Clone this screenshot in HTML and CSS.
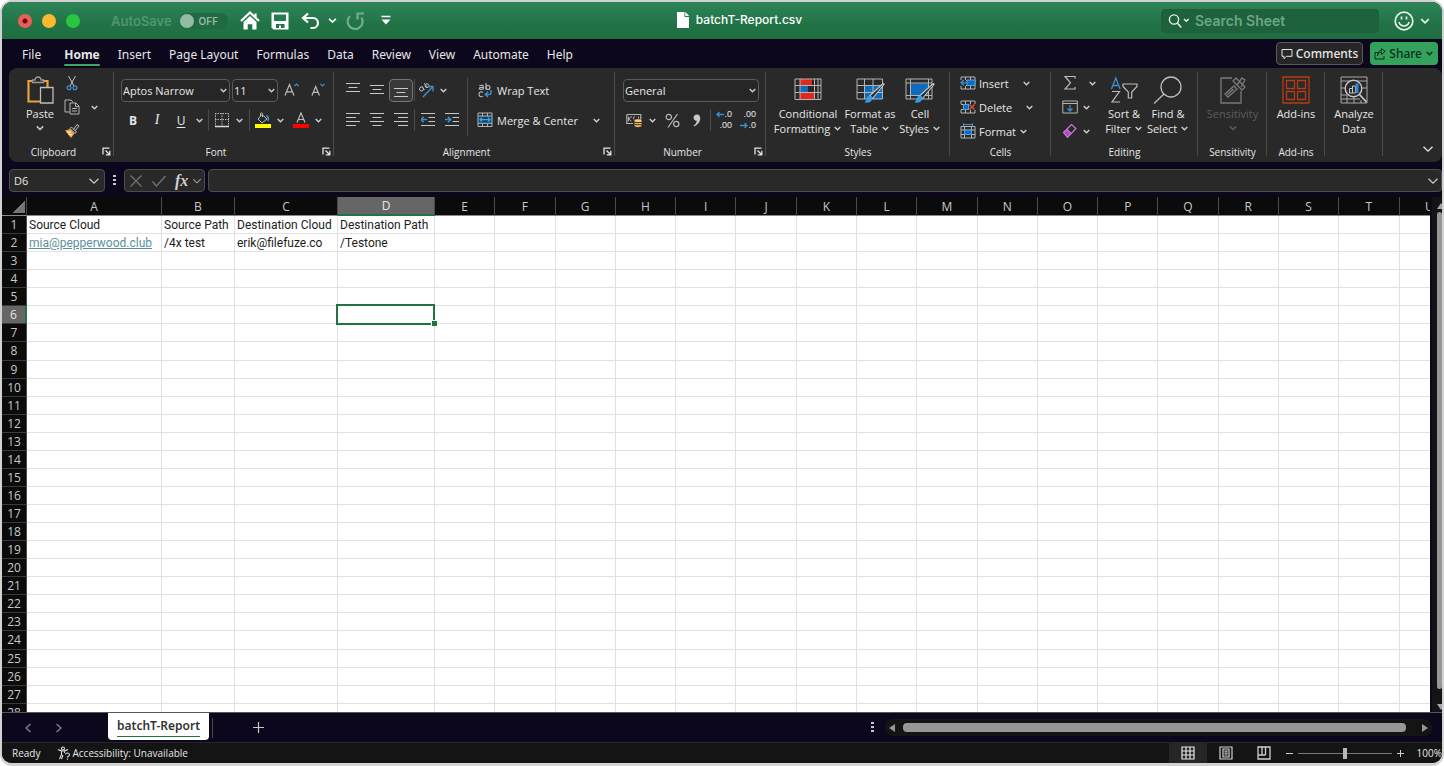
FILE: index.html
```html
<!DOCTYPE html>
<html lang="en">
<head>
<meta charset="utf-8">
<title>batchT-Report.csv</title>
<link rel="stylesheet" href="styles.css">
</head>
<body>
<svg class="sprite" aria-hidden="true">
  <symbol id="chev" viewBox="0 0 8 8"><path d="M1.500 2.700 4 5.200l2.500-2.500" fill="none" stroke="currentColor" stroke-width="1.200"/></symbol>
  <symbol id="chev-wide" viewBox="0 0 12 8"><path d="M1.500 1.800 6 6.200l4.500-4.400" fill="none" stroke="currentColor" stroke-width="1.300"/></symbol>
  <symbol id="launch" viewBox="0 0 9 9"><path d="M1 7.500V1.200h6.500M3.500 3.500l4 4M7.800 3.800v4h-4" fill="none" stroke="currentColor" stroke-width="1.300"/></symbol>
</svg>

<div class="window">
  <header class="titlebar">
    <div class="title-left">
      <div class="lights">
        <button class="light light-close" aria-label="Close"></button>
        <button class="light light-min" aria-label="Minimize"></button>
        <button class="light light-max" aria-label="Zoom"></button>
      </div>
      <label class="autosave"><span>AutoSave</span><input type="checkbox" class="switch-input"><span class="switch"><i></i>OFF</span></label>
      <button class="tb home" aria-label="Home"><svg width="20" height="20" viewBox="0 0 20 20"><path d="M1 10 10 1.500l9 8.500M15.500 2.500v4" fill="none" stroke="#fff" stroke-width="2.200"/><path d="M3.500 11 10 5l6.500 6v7.500h-4.200v-5.300H7.700v5.300H3.500z" fill="#fff"/></svg></button>
      <button class="tb" aria-label="Save"><svg width="18" height="18" viewBox="0 0 18 18"><path d="M.5.500h17v17h-15l-2-2z" fill="#fff"/><path d="M3 2.500h12v6.500H3z" fill="#277d4e"/><path d="M5 12h8.500v4H10v-2.500H8V16H5z" fill="#227345"/></svg></button>
      <button class="tb undo" aria-label="Undo"><svg width="20" height="18" viewBox="0 0 20 18"><path d="M7 1.500 2 6l5 4.500M2.500 6H12a5 5 0 0 1 0 10H9.500" fill="none" stroke="#fff" stroke-width="2.200"/></svg><svg width="11" height="11" viewBox="0 0 8 8"><use href="#chev"/></svg></button>
      <button class="tb redo" aria-label="Redo"><svg width="20" height="20" viewBox="0 0 20 20"><path d="M4 5a7.500 7.500 0 1 0 11.500 1.500M11.500 8.500V2.500H18" fill="none" stroke="#73ad8b" stroke-width="2.200"/></svg></button>
      <button class="tb more" aria-label="Customize toolbar"><svg width="10" height="11" viewBox="0 0 10 11"><path d="M.5 1.500h9" stroke="#fff" stroke-width="1.500"/><path d="M.5 4.500h9L5 9.500z" fill="#fff"/></svg></button>
    </div>
    <div class="doc-title"><svg width="14" height="18" viewBox="0 0 14 18"><path d="M1 1h7.500v5H13v11H1z" fill="#fff"/><path d="M9.300.8 13.200 5H9.300z" fill="#fff"/></svg><span>batchT-Report.csv</span></div>
    <div class="title-right">
      <label class="search"><svg width="22" height="16" viewBox="0 0 22 16"><circle cx="6" cy="6.500" r="4.600" fill="none" stroke="#e6f2ea" stroke-width="1.400"/><path d="m9.300 10 4 4.500M16 6l2.300 2.300L20.600 6" fill="none" stroke="#e6f2ea" stroke-width="1.500"/></svg><input type="search" placeholder="Search Sheet" aria-label="Search Sheet"></label>
      <button class="smile" aria-label="Feedback"><svg width="20" height="20" viewBox="0 0 20 20"><circle cx="10" cy="10" r="8.800" fill="none" stroke="#e6f2ea" stroke-width="1.700"/><path d="M7.500 5.500v3M12.500 5.500v3" stroke="#e6f2ea" stroke-width="1.700"/><path d="M5 11c1.200 5.200 8.800 5.200 10 0" fill="none" stroke="#e6f2ea" stroke-width="1.500"/></svg><svg width="12" height="12"><use href="#chev"/></svg></button>
    </div>
  </header>

  <nav class="tabs">
    <button class="tab file">File</button>
    <button class="tab active">Home</button>
    <button class="tab">Insert</button>
    <button class="tab">Page Layout</button>
    <button class="tab">Formulas</button>
    <button class="tab">Data</button>
    <button class="tab">Review</button>
    <button class="tab">View</button>
    <button class="tab">Automate</button>
    <button class="tab">Help</button>
    <div class="tab-actions">
      <button class="comments"><svg width="12" height="12" viewBox="0 0 12 12"><path d="M1 1.500h10v6.800H5.500L3 10.800V8.300H1z" fill="none" stroke="currentColor"/></svg>Comments</button>
      <button class="share"><svg width="12" height="12" viewBox="0 0 12 12"><path d="M4 4.500H1V11h9V8M3.500 8c.3-2.500 1.500-3.800 4-3.800V6.500L11.300 3.300 7.500.7v1.800C4.800 2.800 3.500 4.500 3.500 8z" fill="none" stroke="currentColor"/></svg>Share<svg class="c" width="9" height="9"><use href="#chev"/></svg></button>
    </div>
  </nav>

  <section class="ribbon" aria-label="Home ribbon">
    <div class="group g-clip">
      <div class="body">
        <button class="big paste"><svg width="28" height="28" viewBox="0 0 28 28"><path d="M6 5H2.500v20.500H14" fill="none" stroke="#e9a33a" stroke-width="2.200"/><path d="M17 5h4.500v7" fill="none" stroke="#e9a33a" stroke-width="2.200"/><path d="M6.500 6.500V4H9c.3-4 5.700-4 6 0h2.500v2.500z" fill="#2a2a2a" stroke="#9a9a9a" stroke-width="1.300"/><path d="M14.500 11.500H27V27H14.500z" fill="#262626" stroke="#bdbdbd" stroke-width="1.300"/></svg><span>Paste</span><svg class="c" width="10" height="10"><use href="#chev"/></svg></button>
        <div class="minis">
          <button class="mini" aria-label="Cut"><svg width="12" height="16" viewBox="0 0 12 16"><path d="M2.500 1 8 11M9.500 1 4 11" stroke="#c8c8c8" fill="none"/><circle cx="3" cy="12.700" r="1.900" fill="none" stroke="#3d8fcc" stroke-width="1.300"/><circle cx="9" cy="12.700" r="1.900" fill="none" stroke="#3d8fcc" stroke-width="1.300"/></svg></button>
          <div class="row"><button class="mini" aria-label="Copy"><svg width="16" height="16" viewBox="0 0 16 16"><path d="M5.500 13H1V1h6l2 2" fill="none" stroke="#b4b4b4"/><path d="M6 4h6l3 3v8H6zM11.500 4v3.500H15M8 9.500h5M8 12h5" fill="none" stroke="#b4b4b4"/></svg></button><button class="dd" aria-label="Copy options"><svg class="c" width="9" height="9"><use href="#chev"/></svg></button></div>
          <button class="mini" aria-label="Format Painter"><svg width="16" height="16" viewBox="0 0 16 16"><path d="M1 7.500 6.500 6l4 4.500L7 15z" fill="#eca63d"/><path d="m3 9 4 .3M4.500 11.500l3.500.3" stroke="#fff"/><path d="m6 5.500 5 5 1.500-1.500-5-5zM9.500 6.500l3.500-5 2 1.500-4 5" fill="#2a2a2a" stroke="#c4c4c4"/></svg></button>
        </div>
      </div>
      <div class="foot"><span>Clipboard</span><button class="launch" aria-label="Clipboard settings"><svg width="9" height="9"><use href="#launch"/></svg></button></div>
    </div>

    <div class="group g-font">
      <div class="body rows">
        <div class="row tight">
          <div class="combo w-font"><select aria-label="Font"><option>Aptos Narrow</option></select><svg class="c" width="9" height="9"><use href="#chev"/></svg></div>
          <div class="combo w-size"><select aria-label="Font size"><option>11</option></select><svg class="c" width="9" height="9"><use href="#chev"/></svg></div>
          <button class="ib" aria-label="Increase font size"><svg width="16" height="16" viewBox="0 0 16 16"><path d="M1 13.500 5.500 2.500l4.500 11M2.700 9.800h5.600" fill="none" stroke="#bdbdbd" stroke-width="1.200"/><path d="m10.500 4 2-2 2 2" fill="none" stroke="#3d8fcc" stroke-width="1.200"/></svg></button>
          <button class="ib" aria-label="Decrease font size"><svg width="16" height="16" viewBox="0 0 16 16"><path d="m2 13.500 3.700-9 3.700 9M3.400 10.300H8" fill="none" stroke="#bdbdbd" stroke-width="1.200"/><path d="m10.500 2 2 2 2-2" fill="none" stroke="#3d8fcc" stroke-width="1.200"/></svg></button>
        </div>
        <div class="row">
          <button class="ib b">B</button><button class="ib i">I</button><button class="ib u">U</button><button class="dd dd-s" aria-label="Underline options"><svg class="c" width="9" height="9"><use href="#chev"/></svg></button>
          <span class="sep"></span>
          <button class="ib n" aria-label="Borders"><svg width="16" height="16" viewBox="0 0 16 16"><path d="M1.500 1v13M14.500 1v13M8 1v13M1 1.500h14M1 7.500h14" stroke="#b4b4b4" stroke-dasharray="1.500 1"/><path d="M1 14.500h14" stroke="#ddd" stroke-width="1.500"/></svg></button><button class="dd" aria-label="Border options"><svg class="c" width="9" height="9"><use href="#chev"/></svg></button>
          <span class="sep"></span>
          <button class="ib n" aria-label="Fill color"><svg width="16" height="16" viewBox="0 0 16 16"><path d="m7 2.500 5 4.500-5 4-4-4zM5.500 4V1.500c0-1 2-1 2 0V5" fill="none" stroke="#bdbdbd"/><path d="M11 4c3 0 2.500 3 2 5" fill="none" stroke="#3d8fcc" stroke-width="1.600"/><path d="M0 12h16v4H0z" fill="#ff0"/></svg></button><button class="dd" aria-label="Fill options"><svg class="c" width="9" height="9"><use href="#chev"/></svg></button>
          <span class="gap"></span>
          <button class="ib n" aria-label="Font color"><svg width="16" height="16" viewBox="0 0 16 16"><path d="M4 10.500 8 1l4 9.500M5.500 7.500h5" fill="none" stroke="#bdbdbd" stroke-width="1.200"/><path d="M0 12h16v4H0z" fill="#f00"/></svg></button><button class="dd" aria-label="Font color options"><svg class="c" width="9" height="9"><use href="#chev"/></svg></button>
        </div>
      </div>
      <div class="foot"><span>Font</span><button class="launch" aria-label="Font settings"><svg width="9" height="9"><use href="#launch"/></svg></button></div>
    </div>

    <div class="group g-align">
      <div class="body">
        <div class="rows left">
          <div class="row">
            <button class="ib" aria-label="Top align"><svg class="ln" width="14" height="14" viewBox="0 0 14 14"><path d="M0 .5h14M2.500 4.500h9M0 8.500h14"/></svg></button>
            <button class="ib" aria-label="Middle align"><svg class="ln" width="14" height="14" viewBox="0 0 14 14"><path d="M0 2.500h14M2.500 6.500h9M0 10.500h14"/></svg></button>
            <button class="ib on" aria-label="Bottom align"><svg class="ln" width="14" height="14" viewBox="0 0 14 14"><path d="M0 5.500h14M2.500 9.500h9M0 13.500h14"/></svg></button>
            <span class="sep s"></span>
            <button class="ib n" aria-label="Orientation"><svg width="16" height="16" viewBox="0 0 16 16"><circle cx="3.500" cy="7" r="2" fill="none" stroke="#bdbdbd"/><path d="M3.500 4 6.500 8M6 1l4 5" stroke="#bdbdbd"/><circle cx="9" cy="3.700" r="1.900" fill="none" stroke="#bdbdbd"/><path d="m5 15 9.500-10M10 4.500h5v5" fill="none" stroke="#3d8fcc" stroke-width="1.300"/></svg></button><button class="dd" aria-label="Orientation options"><svg class="c" width="9" height="9"><use href="#chev"/></svg></button>
          </div>
          <div class="row">
            <button class="ib" aria-label="Align left"><svg class="ln" width="14" height="14" viewBox="0 0 14 14"><path d="M0 .5h14M0 4.500h10M0 8.500h14M0 12.500h10"/></svg></button>
            <button class="ib" aria-label="Center"><svg class="ln" width="14" height="14" viewBox="0 0 14 14"><path d="M0 .5h14M2.500 4.500h9M0 8.500h14M2.500 12.500h9"/></svg></button>
            <button class="ib" aria-label="Align right"><svg class="ln" width="14" height="14" viewBox="0 0 14 14"><path d="M0 .5h14M4 4.500h10M0 8.500h14M4 12.500h10"/></svg></button>
            <span class="sep s"></span>
            <button class="ib" aria-label="Decrease indent"><svg class="ln" width="14" height="14" viewBox="0 0 14 14"><path d="M0 .5h14M7.500 4.500H14M7.500 8.500H14M0 12.500h14"/><path class="bl" d="M0 6.500h6M2.700 3.800 0 6.500l2.700 2.700"/></svg></button>
            <button class="ib" aria-label="Increase indent"><svg class="ln" width="14" height="14" viewBox="0 0 14 14"><path d="M0 .5h14M7.500 4.500H14M7.500 8.500H14M0 12.500h14"/><path class="bl" d="M0 6.500h5.500M3 3.800l2.700 2.700L3 9.200"/></svg></button>
          </div>
        </div>
        <div class="rows right">
          <button class="tbtn"><svg width="16" height="16" viewBox="0 0 16 16"><g fill="none" stroke="#bdbdbd" stroke-width="1.100"><path d="M2.300 3.800c3-1.200 4-.3 4 1V7.500M6.300 5.200c-3 0-4 .3-4 1.300s3 1.500 4-.3M9 1v6.500"/><circle cx="11" cy="5.500" r="2"/><path d="M6 10.500c-2-1.500-4-.3-4 1.800s2 3.200 4 1.800"/></g><path d="M14 8v2.500c0 1.500-.5 2-2 2H8.500M11 9.800l-2.700 2.700L11 15" fill="none" stroke="#3d8fcc" stroke-width="1.500"/></svg>Wrap Text</button>
          <button class="tbtn merge"><svg width="16" height="16" viewBox="0 0 16 16"><path d="M1 1h14v13.500H1zM1 4h14M1 11.500h14M5.500 1v3M10.500 1v3M5.500 11.500v3M10.500 11.500v3" fill="none" stroke="#b4b4b4"/><path d="M1.500 4.500h13v6.500h-13z" fill="#223c50" stroke="#3d8fcc"/><path d="M3 7.700h10M5 5.700l-2 2 2 2M11 5.700l2 2-2 2" fill="none" stroke="#4aa3e3" stroke-width="1.200"/></svg>Merge &amp; Center<svg class="c" width="9" height="9"><use href="#chev"/></svg></button>
        </div>
      </div>
      <div class="foot"><span>Alignment</span><button class="launch" aria-label="Alignment settings"><svg width="9" height="9"><use href="#launch"/></svg></button></div>
    </div>

    <div class="group g-num">
      <div class="body rows">
        <div class="row"><div class="combo w-num"><select aria-label="Number format"><option>General</option></select><svg class="c" width="9" height="9"><use href="#chev"/></svg></div></div>
        <div class="row">
          <button class="ib cur" aria-label="Accounting format"><svg width="16" height="16" viewBox="0 0 16 16"><path d="M.8 2.500h14v5M.8 2.500v9H7" fill="none" stroke="#b4b4b4" stroke-width="1.200"/><path d="M6 5c-3-.5-3.500 3.500-.5 4M2.500 4.500v5M9 4.500c-2 0-2 2.500-1 3M12.500 4.500v2" fill="none" stroke="#b4b4b4"/><path d="M8.500 8.500h7V14c0 1.500-7 1.500-7 0z" fill="#e9b35a"/><path d="M8.500 10.500h7M8.500 12.700h7" stroke="#4a3615"/><ellipse cx="12" cy="8.500" rx="3.500" ry="1.300" fill="#f6cf8a"/></svg></button><button class="dd" aria-label="Accounting options"><svg class="c" width="9" height="9"><use href="#chev"/></svg></button>
          <button class="ib pct" aria-label="Percent"><svg width="15" height="15" viewBox="0 0 15 15"><g fill="none" stroke="#bdbdbd" stroke-width="1.200"><circle cx="3.800" cy="4" r="2.700"/><circle cx="11.200" cy="11" r="2.700"/><path d="M12.500 1 3 14.500"/></g></svg></button>
          <button class="ib" aria-label="Comma style"><svg width="10" height="15" viewBox="0 0 10 15"><path d="M5 1.500c4.500 0 5 8-2.500 12l-.8-1c2.500-1.800 3-3.300 3-4.700C.5 8 .5 1.500 5 1.500z" fill="#c8c8c8"/></svg></button>
          <span class="sep s"></span>
          <button class="ib dec" aria-label="Increase decimal"><span><svg width="8" height="7" viewBox="0 0 8 7"><path d="M8 3.500H1M3.500 1 1 3.500 3.500 6" fill="none" stroke="#3d8fcc" stroke-width="1.300"/></svg>.0</span><span>.00</span></button>
          <button class="ib dec" aria-label="Decrease decimal"><span>.00</span><span><svg width="8" height="7" viewBox="0 0 8 7"><path d="M0 3.500h7M4.500 1 7 3.500 4.500 6" fill="none" stroke="#3d8fcc" stroke-width="1.300"/></svg>.0</span></button>
        </div>
      </div>
      <div class="foot"><span>Number</span><button class="launch" aria-label="Number settings"><svg width="9" height="9"><use href="#launch"/></svg></button></div>
    </div>

    <div class="group g-styles">
      <div class="body">
        <button class="big w66"><svg width="28" height="28" viewBox="0 0 28 28"><path d="M6 3h12v6H6zM6 17h14v6H6z" fill="#e0281e"/><path d="M6 10h8v6H6z" fill="#0f6cbd"/><path d="M1 3h26v20.500H1zM1 9.500h26M1 16.500h26M6 3v20.500M20.500 3v20.500M24 3v20.500" fill="none" stroke="#b4b4b4"/></svg><span>Conditional<br>Formatting <svg class="c" width="9" height="9"><use href="#chev"/></svg></span></button>
        <button class="big w58"><svg width="30" height="28" viewBox="0 0 30 28"><path d="M10 10h17v13H10z" fill="#0f6cbd"/><path d="M2 3h25.500v20H2zM2 9.500h25.500M2 16.500h25.500M9.500 3v20M18 3v20" fill="none" stroke="#b4b4b4"/><path d="M29 8.500 17.500 22.500l-3-2.500L27 8.500c1.500-1 2.500-.7 2 0z" fill="#2a2a2a" stroke="#c8c8c8" stroke-width="1.100"/><path d="M14.500 19.500c2.200.3 3.200 1.500 3 3-1 4-4.500 4.500-8 4 2-1.500 1.500-6 5-7z" fill="#3a9be0"/></svg><span>Format as<br>Table <svg class="c" width="9" height="9"><use href="#chev"/></svg></span></button>
        <button class="big w42"><svg width="30" height="28" viewBox="0 0 30 28"><path d="M6 7.500h18V19H6z" fill="#0f6cbd"/><path d="M1 3h26v20H1zM1 7h26M1 19.500h26M5.500 3v20M23.500 3v20" fill="none" stroke="#b4b4b4"/><path d="M29 8.500 17.500 22.500l-3-2.500L27 8.500c1.500-1 2.500-.7 2 0z" fill="#2a2a2a" stroke="#c8c8c8" stroke-width="1.100"/><path d="M14.500 19.500c2.200.3 3.200 1.500 3 3-1 4-4.500 4.500-8 4 2-1.500 1.500-6 5-7z" fill="#3a9be0"/></svg><span>Cell<br>Styles <svg class="c" width="9" height="9"><use href="#chev"/></svg></span></button>
      </div>
      <div class="foot"><span>Styles</span></div>
    </div>

    <div class="group g-cells">
      <div class="body stack">
        <button class="tbtn far"><svg width="16" height="16" viewBox="0 0 16 16"><path d="M1 2h14v12H1zM1 5.500h14M1 10.500h14M5.500 2v12M10.500 2v12" fill="none" stroke="#b4b4b4"/><path d="M7 5h8v5.500H7z" fill="#0f6cbd" stroke="#4aa3e3"/><path d="M0 5h6v6H0z" fill="#2a2a2a"/><path d="M7 7.800H1M3.800 5 1 7.800l2.800 2.700" fill="none" stroke="#3d8fcc" stroke-width="1.300"/></svg>Insert<svg class="c" width="9" height="9"><use href="#chev"/></svg></button>
        <button class="tbtn far"><svg width="16" height="16" viewBox="0 0 16 16"><path d="M1 5V2h14v3M1 11v3h14v-3M1 5.500h8M1 10.500h8M5.500 2v12M10.500 2v3M10.500 11v3" fill="none" stroke="#b4b4b4"/><path d="M3.500 5.500h5v5h-5z" fill="#0f6cbd" stroke="#4aa3e3"/><path d="m9.500 5.500 5 5M14.500 5.500l-5 5" stroke="#e0483e" stroke-width="1.500"/></svg>Delete<svg class="c" width="9" height="9"><use href="#chev"/></svg></button>
        <button class="tbtn"><svg width="16" height="16" viewBox="0 0 16 16"><path d="M1 3.500h14V15H1zM1 7h14M1 11.500h14M4.500 3.500V15M11.500 3.500V15" fill="none" stroke="#b4b4b4"/><path d="M4.500 7h7v4.500h-7z" fill="#0f6cbd" stroke="#4aa3e3"/><path d="M3.500 1.500h9M3.500 0v3M12.500 0v3" stroke="#3d8fcc"/></svg>Format<svg class="c" width="9" height="9"><use href="#chev"/></svg></button>
      </div>
      <div class="foot"><span>Cells</span></div>
    </div>

    <div class="group g-edit">
      <div class="body">
        <div class="stack">
          <button class="pair wide" aria-label="AutoSum"><svg width="16" height="16" viewBox="0 0 16 16"><path d="M13 3.500V1.500H3l5.500 6.300L3 14h10v-2" fill="none" stroke="#bdbdbd" stroke-width="1.200"/></svg><svg class="c" width="9" height="9"><use href="#chev"/></svg></button>
          <button class="pair" aria-label="Fill"><svg width="16" height="16" viewBox="0 0 16 16"><path d="M.8 2h14.500v12H.8zM.8 4.500h14.500" fill="none" stroke="#b4b4b4"/><path d="M8 6v6M5.500 9.500 8 12l2.500-2.500" fill="none" stroke="#3d8fcc" stroke-width="1.300"/></svg><svg class="c" width="9" height="9"><use href="#chev"/></svg></button>
          <button class="pair" aria-label="Clear"><svg width="16" height="16" viewBox="0 0 16 16"><path d="m1.500 9.500 3.500-3 4 4-3.500 4z" fill="#b146c2"/><path d="M1.500 9.500 9.500 1.500l4.500 4-8.500 9zM5 6.500l4 4" fill="none" stroke="#c77fd4" stroke-width="1.100"/></svg><svg class="c" width="9" height="9"><use href="#chev"/></svg></button>
        </div>
        <button class="big w44"><svg width="28" height="28" viewBox="0 0 28 28"><path d="M1.500 13 5.800 2l4.300 11M3 9.500h5.800" fill="none" stroke="#3d8fcc" stroke-width="1.300"/><path d="M2 15.500h7.500L2 26h8" fill="none" stroke="#bdbdbd" stroke-width="1.200"/><path d="M13 8h14v2.500l-5.300 5.500v6h-3.400v-6L13 10.500z" fill="none" stroke="#bdbdbd" stroke-width="1.200"/></svg><span>Sort &amp;<br>Filter <svg class="c" width="9" height="9"><use href="#chev"/></svg></span></button>
        <button class="big w44"><svg width="36" height="28" viewBox="0 0 36 28"><circle cx="21" cy="11" r="10" fill="none" stroke="#bdbdbd" stroke-width="1.300"/><path d="M14 18 4 27.500" stroke="#bdbdbd" stroke-width="1.300"/></svg><span>Find &amp;<br>Select <svg class="c" width="9" height="9"><use href="#chev"/></svg></span></button>
      </div>
      <div class="foot"><span>Editing</span></div>
    </div>

    <div class="group g-sens">
      <div class="body">
        <button class="big fill" disabled><svg width="28" height="28" viewBox="0 0 28 28"><g fill="none" stroke="#7a7a7a" stroke-width="1.300"><path d="M13 2H2v25h20V15"/><path d="m6 18 9-8 3 3-9 8zM8.500 18.500l6-5.500"/><path d="m14 5 3-3 9 9-3 3zM18 9l5-7 3 2-4 7"/></g></svg><span>Sensitivity</span><svg class="c" width="10" height="10"><use href="#chev"/></svg></button>
      </div>
      <div class="foot"><span>Sensitivity</span></div>
    </div>
    <div class="group g-add">
      <div class="body"><button class="big fill"><svg width="28" height="28" viewBox="0 0 28 28"><path d="M1 1h26v26H1zM4.500 4.500h8v8h-8zM15.500 4.500h8v8h-8zM4.500 15.500h8v8h-8zM15.500 15.500h8v8h-8z" fill="none" stroke="#b83c14" stroke-width="1.300"/></svg><span>Add-ins</span></button></div>
      <div class="foot"><span>Add-ins</span></div>
    </div>
    <div class="group g-add">
      <div class="body"><button class="big fill"><svg width="28" height="28" viewBox="0 0 28 28"><path d="M1 1h26v26H1zM1 5h26M1 12h5M1 19h6M1 23h19M22 12h5M7 19v8M14 21v6M21 24v3" fill="none" stroke="#a8a8a8"/><circle cx="13.500" cy="12.500" r="8.300" fill="#2a2a2a" stroke="#c8c8c8" stroke-width="1.400"/><path d="m19.500 18.500 7 7.500" stroke="#c8c8c8" stroke-width="1.800"/><path d="M9.500 12.500h3V17h-3zM12.500 10h3v7h-3z" fill="none" stroke="#c8c8c8"/><path d="M15.500 7.500h3V17h-3z" fill="#2b88d8"/></svg><span>Analyze<br>Data</span></button></div>
      <div class="foot"></div>
    </div>
    <button class="collapse" aria-label="Collapse ribbon"><svg width="12" height="8"><use href="#chev-wide"/></svg></button>
  </section>

  <section class="formula">
    <div class="namebox"><input value="D6" aria-label="Name box"><svg width="12" height="8"><use href="#chev-wide"/></svg></div>
    <svg class="dots" width="3" height="11" viewBox="0 0 3 11"><path d="M0 0h3v2H0zM0 4h3v2H0zM0 8h3v2H0z" fill="#c8c8c8"/></svg>
    <div class="fx">
      <button aria-label="Cancel"><svg width="14" height="14" viewBox="0 0 14 14"><path d="m1.500 1.500 11 11M12.500 1.500l-11 11" stroke="#737373" stroke-width="1.200"/></svg></button>
      <button aria-label="Enter"><svg width="16" height="14" viewBox="0 0 16 14"><path d="m1.500 7.500 4 4.500 9-10" fill="none" stroke="#737373" stroke-width="1.200"/></svg></button>
      <button class="fxb">fx</button>
      <svg class="dim" width="10" height="8" viewBox="0 0 12 8"><use href="#chev-wide"/></svg>
    </div>
    <div class="finput"><input aria-label="Formula"><svg width="12" height="8"><use href="#chev-wide"/></svg></div>
  </section>

  <main class="sheet">
    <div class="cells"><table id="grid"></table></div>
    <div class="vscroll"><i class="up"></i><b></b><i class="down"></i></div>
  </main>

  <div class="sheetbar">
    <button class="nav" aria-label="Previous sheet"><svg width="8" height="10" viewBox="0 0 8 10"><path d="M6.500 1 2 5l4.500 4" fill="none" stroke="#858585" stroke-width="1.300"/></svg></button>
    <button class="nav" aria-label="Next sheet"><svg width="8" height="10" viewBox="0 0 8 10"><path d="M1.500 1 6 5 1.500 9" fill="none" stroke="#858585" stroke-width="1.300"/></svg></button>
    <button class="sheettab"><span>batchT-Report</span></button>
    <span class="bar"></span>
    <button class="add" aria-label="New sheet"><svg width="11" height="11" viewBox="0 0 11 11"><path d="M5.500 0v11M0 5.500h11" stroke="#c8c8c8" stroke-width="1.200"/></svg></button>
    <svg class="hdots" width="3" height="11" viewBox="0 0 3 11"><path d="M0 0h3v2H0zM0 4h3v2H0zM0 8h3v2H0z" fill="#c8c8c8"/></svg>
    <div class="hscroll"><i class="lt"></i><b></b><i class="rt"></i></div>
  </div>

  <footer class="status">
    <span>Ready</span>
    <span class="acc"><svg width="14" height="14" viewBox="0 0 14 14"><g fill="none" stroke="#e0e0e0" stroke-width="1.100"><circle cx="6" cy="2.500" r="1.500"/><path d="M1 3.500c3 1.800 7 1.800 10 0M4.500 5v3.500L2.500 13M7.500 5v2M6 9l-1.500 4"/><path d="M8.500 8.500c.3-2 4-2 4 .3 0 1.400-2 1.500-2 2.700M10.500 12.500v1.200"/></g></svg>Accessibility: Unavailable</span>
    <div class="views">
      <button class="view on" aria-label="Normal"><svg width="14" height="14" viewBox="0 0 14 14"><path d="M1 1h12v12H1zM5 1v12M9 1v12M1 5h12M1 9h12" fill="none" stroke="#e6e6e6" stroke-width="1.200"/></svg></button>
      <button class="view" aria-label="Page Layout"><svg width="14" height="14" viewBox="0 0 14 14"><path d="M1 1h12v12H1zM4 3h6v8H4zM5.500 5.200h3M5.500 7.100h3M5.500 9h3" fill="none" stroke="#d0d0d0" stroke-width="1.200"/></svg></button>
      <button class="view" aria-label="Page Break Preview"><svg width="14" height="14" viewBox="0 0 14 14"><path d="M1 1h12v12H1zM5 1v8M8.500 1v8M1 9h7.500" fill="none" stroke="#d0d0d0" stroke-width="1.300"/></svg></button>
    </div>
    <button class="zoom-btn" aria-label="Zoom out"><svg width="9" height="9" viewBox="0 0 9 9"><path d="M1 4.500h7" stroke="#d0d0d0"/></svg></button>
    <input class="zoom" type="range" min="0" max="100" value="50" aria-label="Zoom">
    <button class="zoom-btn" aria-label="Zoom in"><svg width="9" height="9" viewBox="0 0 9 9"><path d="M1 4.500h7M4.500 1v7" stroke="#d0d0d0"/></svg></button>
    <span class="pc">100%</span>
  </footer>
</div>
<script src="sheet.js"></script>
</body>
</html>
```
FILE: styles.css
```css
* { box-sizing: border-box; }
body { margin: 0; background: #fff; font-family: "Open Sans", "Noto Sans", sans-serif; font-size: 12px; color: #e6e6e6; }
button, input, select { font: inherit; color: inherit; background: none; border: 0; padding: 0; margin: 0; outline: 0; }
button { display: flex; align-items: center; justify-content: center; white-space: nowrap; }
svg { display: block; flex: none; }
.sprite { display: none; }
.c { color: #d0d0d0; }

.window { height: 100vh; display: flex; flex-direction: column; overflow: hidden; background: #0c071c; border: 2px solid #d2d2d2; border-bottom-width: 3px; border-radius: 12px; }

.titlebar { flex: none; height: 37px; display: grid; grid-template-columns: 1fr auto 1fr; align-items: center; background: linear-gradient(#2e8558, #217346 60%, #1f6e42); font-family: Inter, "Liberation Sans", sans-serif; }
.title-left { display: flex; align-items: center; padding-left: 16px; }
.lights { display: flex; gap: 10px; }
.light { width: 14px; height: 14px; border-radius: 50%; }
.light-close { background: radial-gradient(circle, #5c0d0b 2px, #ee5d57 3px); }
.light-min { background: #fbb92f; }
.light-max { background: #27c63f; }
.autosave { display: flex; align-items: center; gap: 8px; margin-left: 31px; font-size: 13px; font-weight: 600; color: #52966f; }
.switch-input { position: absolute; opacity: 0; }
.switch { display: flex; align-items: center; gap: 5px; width: 48px; height: 16px; border-radius: 8px; background: #206a42; color: #93bda3; font-size: 10px; font-weight: 600; }
.switch i { width: 14px; height: 14px; border-radius: 50%; background: #93bda3; }
.tb { color: #fff; }
.home { margin: 0 11px 0 12px; }
.undo { gap: 6px; margin-left: 12px; }
.redo { margin-left: 8px; }
.more { margin-left: 15px; }
.doc-title { display: flex; align-items: center; gap: 6px; padding: 0 0 2px 34px; font-size: 12px; font-weight: 500; color: #fff; }
.title-right { display: flex; justify-content: flex-end; align-items: center; gap: 15px; padding-right: 11px; }
.search { display: flex; align-items: center; gap: 5px; width: 218px; height: 24px; padding-left: 7px; border-radius: 4px; background: #1d623c; }
.search input { width: 150px; font-size: 14px; font-weight: 600; }
.search input::placeholder { color: #6da587; opacity: 1; }
.smile { gap: 5px; color: #e6f2ea; }

.tabs { flex: none; height: 29px; display: flex; align-items: stretch; gap: 18px; padding-left: 20px; font-family: "Noto Sans", "Open Sans", sans-serif; }
.tab { position: relative; padding-top: 2px; font-size: 12px; }
.file { margin-right: 5px; }
.active { font-weight: 700; }
.active::after { content: ""; position: absolute; left: 0; right: 0; bottom: 2px; height: 2px; border-radius: 1px; background: #41a566; }
.tab-actions { display: flex; align-items: center; gap: 7px; margin-left: auto; padding-right: 4px; }
.comments, .share { height: 23px; border-radius: 4px; gap: 3px; padding: 0 4px; font-weight: 500; }
.comments { background: #262626; border: 1px solid #5a5a5a; }
.share { background: #33a35c; color: #0c2d19; }
.share .c { color: #0c2d19; }

.ribbon { flex: none; display: flex; height: 94px; margin-left: 7px; padding-top: 3px; background: #292929; border-radius: 8px; }
.group { flex: none; height: 89px; display: flex; flex-direction: column; background: linear-gradient(#4a4a4a, #4a4a4a) right 1px / 1px 84px no-repeat; }
.body { flex: 1; display: flex; }
.foot { flex: none; height: 17px; display: flex; align-items: center; font-size: 10px; }
.foot span { flex: 1; text-align: center; }
.launch { width: 16px; height: 12px; }
.g-clip { width: 105px; }
.g-font { width: 220px; }
.g-align { width: 281px; }
.g-num { width: 151px; }
.g-styles { width: 184px; }
.g-cells { width: 101px; }
.g-edit { width: 147px; }
.g-sens { width: 69px; }
.g-add { width: 58px; }
.row { display: flex; align-items: center; height: 24px; }
.tight { gap: 2px; }
.rows { display: flex; flex-direction: column; gap: 6px; padding-top: 7px; }
.g-font .rows { padding-left: 7px; }
.g-num .rows { padding-left: 8px; }
.stack { display: flex; flex-direction: column; }
.big { flex-direction: column; justify-content: flex-start; padding-top: 5px; gap: 2px; font-size: 11px; line-height: 15px; }
.big span { text-align: center; }
.big span svg { display: inline-block; }
.big:disabled, .big:disabled .c { color: #5c5c5c; }
.fill { width: 100%; }
.w66 { width: 66px; } .w58 { width: 58px; } .w42 { width: 42px; } .w44 { width: 44px; }
.g-styles .body { padding-left: 9px; }
.paste { width: 44px; margin-left: 9px; }
.minis { display: flex; flex-direction: column; }
.mini { width: 20px; height: 24px; }
.dd { width: 14px; height: 24px; }
.dd-s { width: 12px; }
.minis .dd { margin-left: 5px; }
.ib { width: 24px; height: 24px; }
.n { width: 20px; }
.b { font-weight: 700; }
.i { font-family: "Liberation Serif", serif; font-style: italic; font-size: 14px; }
.u { text-decoration: underline; text-underline-offset: 2px; }
.sep { width: 7px; height: 22px; background: linear-gradient(#4a4a4a, #4a4a4a) center / 1px 100% no-repeat; }
.s { width: 3px; }
.gap { width: 4px; }
.cur { width: 22px; } .pct { width: 26px; }
.on.ib { border: 1px solid #757575; border-radius: 4px; background: #383838; height: 23px; }
.ln path { fill: none; stroke: #c8c8c8; }
.ln .bl { stroke: #3d8fcc; stroke-width: 1.5px; }
.combo { display: grid; align-items: center; height: 23px; border: 1px solid #5a5a5a; border-radius: 4px; background: #262626; }
.combo > * { grid-area: 1 / 1; }
.combo select { appearance: none; width: 100%; padding-left: 1px; font-size: 11px; }
.combo svg { justify-self: end; margin-right: 1px; pointer-events: none; }
.w-font { width: 109px; } .w-size { width: 46px; } .w-num { width: 136px; }
.left { width: 134px; padding-left: 7px; background: linear-gradient(#4a4a4a, #4a4a4a) right 7px / 1px 58px no-repeat; }
.right { padding-left: 9px; }
.tbtn { height: 24px; gap: 4px; font-size: 11px; justify-content: flex-start; }
.merge .c { margin-left: 10px; }
.g-cells .stack { padding-left: 10px; }
.g-cells .tbtn { gap: 3px; }
.far .c { margin-left: 10px; }
.pair { height: 24px; gap: 4px; margin-left: 11px; justify-content: flex-start; }
.wide { gap: 10px; }
.g-edit .stack { width: 51px; }
.dec { flex-direction: column; align-items: flex-end; font-family: "Liberation Sans", sans-serif; font-size: 9px; line-height: 11px; padding-right: 4px; }
.dec span { display: flex; align-items: center; }
.collapse { margin: auto 8px 9px auto; }

.formula { flex: none; height: 23px; display: flex; align-items: center; margin: 7px 0 5px 7px; }
.namebox, .fx, .finput { display: flex; align-items: center; height: 23px; border: 1px solid #4d4d4d; border-radius: 4px; background: #292929; color: #c8c8c8; }
.namebox { width: 96px; padding: 0 4px; }
.namebox input { flex: 1; min-width: 0; font-size: 11px; color: #e6e6e6; }
.dots { margin: 0 8px; }
.fx { width: 81px; margin-right: 3px; padding: 0 2px 0 4px; gap: 8px; }
.fxb { font: italic 700 16px "Liberation Serif", serif; color: #d0d0d0; }
.fx .dim { color: #a0a0a0; margin-left: -4px; }
.finput { flex: 1; padding-right: 2px; }
.finput input { flex: 1; }

.sheet { flex: 1; min-height: 0; display: flex; border-bottom: 1px solid #555; }
.cells { flex: 1; min-width: 0; overflow: hidden; background: #fff; }
#grid { width: 1458px; height: 525px; table-layout: fixed; border-collapse: separate; border-spacing: 0; }
#grid th, #grid td { padding: 1px 0 0; overflow: hidden; white-space: nowrap; line-height: 16px; }
#grid thead th { height: 19px; background: #0b0b0b; color: #c8c8c8; font-weight: 400; border-right: 1px solid #4a4a4a; border-bottom: 1px solid #8a8a8a; }
#grid thead .sel { background: #666; border-bottom: 2px solid #217346; color: #e6e6e6; }
#grid thead .corner { background: linear-gradient(135deg, transparent 50%, #757575 50%) 10px 4px / 13px 12px no-repeat #0b0b0b; }
#grid tbody th { background: #0b0b0b; color: #c8c8c8; font-weight: 400; border-right: 1px solid #4a4a4a; border-bottom: 1px solid #3a3a3a; }
#grid tbody .sel { background: #666; border-right: 2px solid #217346; color: #e6e6e6; }
#grid td { padding-left: 2px; color: #1c1c1c; font-family: Roboto, sans-serif; font-size: 12px; border-right: 1px solid #e1e1e1; border-bottom: 1px solid #e1e1e1; }
#grid .cur-cell { position: relative; overflow: visible; }
.cur-cell::before { content: ""; position: absolute; inset: -2px -1px -2px -2px; border: 2px solid #217346; }
.cur-cell::after { content: ""; position: absolute; right: -3px; bottom: -3px; width: 5px; height: 5px; background: #217346; border: 1px solid #fff; border-width: 1px 0 0 1px; }
#grid a { color: #5b8f9c; }
.c-h { width: 25px; } .c-a { width: 135px; } .c-b { width: 73px; } .c-c { width: 103px; } .c-d { width: 97px; }
.vscroll { width: 12px; padding: 6px 0 2px 5px; background: #141414; display: flex; flex-direction: column; gap: 3px; border-left: 2px solid #0c071c; }
.vscroll b { flex: 1; border-radius: 4px; background: #979797; margin-bottom: 12px; }
.vscroll i, .hscroll i { width: 0; height: 0; border: 4px solid transparent; }
.vscroll .up { border-top: 0; border-bottom: 6px solid #a6a6a6; }
.vscroll .down { border-bottom: 0; border-top: 6px solid #a6a6a6; }

.sheetbar { flex: none; height: 29px; display: flex; align-items: center; }
.nav { width: 31px; height: 28px; }
.nav:first-child { margin-left: 10px; }
.sheettab { height: 27px; align-self: flex-start; margin-left: 34px; padding: 0 9px; border-radius: 0 0 4px 4px; background: #fff; color: #333; font-family: "Noto Sans", sans-serif; font-size: 12px; font-weight: 600; }
.sheettab span { line-height: 20px; border-bottom: 1px solid #217346; }
.bar { width: 1px; height: 20px; margin-left: 3px; background: #4a4a4a; }
.add { width: 24px; margin-left: 33px; }
.hdots { margin-left: auto; }
.hscroll { width: 38%; height: 17px; margin: 0 10px 0 11px; padding: 0 4px; border-radius: 8px; background: #141414; display: flex; align-items: center; gap: 8px; }
.hscroll b { flex: 1; height: 9px; border-radius: 4px; background: #979797; margin-right: 8px; }
.hscroll .lt { border-left: 0; border-right: 6px solid #979797; }
.hscroll .rt { border-right: 0; border-left: 6px solid #979797; }

.status { flex: none; height: 21px; display: flex; align-items: center; padding-left: 10px; background: #141414; border-top: 1px solid #262626; font-size: 10px; }
.acc { display: flex; align-items: center; gap: 1px; margin-left: 17px; }
.views { display: flex; margin-left: auto; height: 100%; }
.view { width: 38px; }
.view.on { background: #262626; }
.zoom-btn { width: 13px; height: 14px; }
.zoom { appearance: none; width: 94px; height: 14px; margin: 0 2px; background: linear-gradient(#7a7a7a, #7a7a7a) center / 100% 1px no-repeat; }
.zoom::-webkit-slider-thumb { appearance: none; width: 4px; height: 11px; background: #b8b8b8; }
.pc { margin-left: 10px; }
```
FILE: sheet.js
```js
const letters = "ABCDEFGHIJKLMNOPQRSTU".split("");
const data = {
  1: ["Source Cloud", "Source Path", "Destination Cloud", "Destination Path"],
  2: ['<a href="mailto:mia@pepperwood.club">mia@pepperwood.club</a>', "/4x test", "erik@filefuze.co", "/Testone"]
};
const named = ["c-a", "c-b", "c-c", "c-d"];
let html = '<colgroup><col class="c-h">' + letters.map((_, i) => `<col class="${named[i] || ""}">`).join("") + "</colgroup>";
html += '<thead><tr><th class="corner"></th>' + letters.map(l => `<th class="${l === "D" ? "sel" : ""}">${l}</th>`).join("") + "</tr></thead><tbody>";
for (let r = 1; r <= 28; r++) {
  html += `<tr><th class="${r === 6 ? "sel" : ""}">${r}</th>`;
  letters.forEach((l, c) => {
    const text = (data[r] && data[r][c]) || "";
    html += `<td class="${l === "D" && r === 6 ? "cur-cell" : ""}">${text}</td>`;
  });
  html += "</tr>";
}
document.getElementById("grid").innerHTML = html + "</tbody>";
```
